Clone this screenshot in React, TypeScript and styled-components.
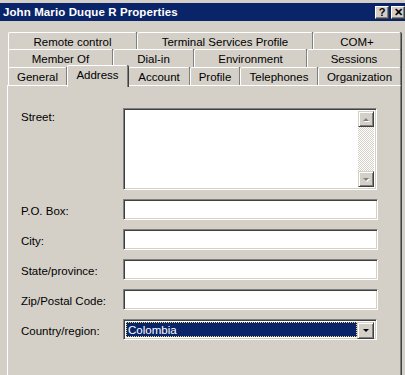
import React from "react";
import styled, { createGlobalStyle } from "styled-components";

const Global = createGlobalStyle`
  html, body { margin: 0; padding: 0; background: #d4d0c8; overflow: hidden; }
  body { font-family: "Liberation Sans", Arial, sans-serif; font-size: 11px; color: #000; }
`;

const Window = styled.div`
  width: 405px;
  height: 375px;
  background: #d4d0c8;
  border-top: 1px solid #d4d0c8;
  box-sizing: border-box;
  overflow: hidden;
`;

const TitleBar = styled.div`
  height: 18px;
  margin-top: 2px;
  background: #0a246a;
  display: flex;
  align-items: center;
  padding-left: 3px;
`;

const TitleText = styled.div`
  flex: 1;
  color: #fff;
  font-weight: bold;
  font-size: 11.5px;
  font-family: "Liberation Sans", Tahoma, sans-serif;
  letter-spacing: 0.1px;
`;

const CaptionButton = styled.div`
  width: 14px;
  height: 13px;
  background: #d4d0c8;
  box-sizing: border-box;
  border-top: 1px solid #fff;
  border-left: 1px solid #fff;
  border-right: 1px solid #404040;
  border-bottom: 1px solid #404040;
  box-shadow: inset -1px -1px 0 #808080;
  margin-left: 2px;
  display: flex;
  align-items: center;
  justify-content: center;
  font-weight: bold;
  font-size: 11px;
  line-height: 1;
  color: #000;
`;

const Body = styled.div`
  padding: 11px 0 0 7px;
`;

const TabRow = styled.div<{ $h: number }>`
  display: flex;
  height: ${(p) => p.$h}px;
  margin-left: 1px;
  position: relative;
`;

const Tab = styled.div<{ $w: number; $sel?: boolean }>`
  width: ${(p) => p.$w}px;
  flex: none;
  box-sizing: border-box;
  border-top: 1px solid #fff;
  border-left: 1px solid #fff;
  border-right: 1px solid #808080;
  box-shadow: 1px 0 0 #404040;
  border-radius: 2px 2px 0 0;
  background: #d4d0c8;
  display: flex;
  align-items: center;
  justify-content: center;
  white-space: nowrap;
  height: ${(p) => (p.$sel ? "22px" : "19px")};
  margin-top: ${(p) => (p.$sel ? "-2px" : "0")};
  position: relative;
  z-index: ${(p) => (p.$sel ? 2 : 1)};
  padding-bottom: ${(p) => (p.$sel ? "4px" : "0")};
  font-size: 11.5px;
`;

const Panel = styled.div`
  width: 394px;
  height: 320px;
  box-sizing: border-box;
  border-top: 1px solid #fff;
  border-left: 1px solid #fff;
  border-right: 1px solid #808080;
  box-shadow: 1px 0 0 #404040;
  padding: 22px 0 0 13px;
  position: relative;
  z-index: 1;
`;

const Form = styled.div`
  display: grid;
  grid-template-columns: 102px 255px;
  row-gap: 9px;
  align-items: center;
`;

const Label = styled.div<{ $top?: boolean }>`
  align-self: ${(p) => (p.$top ? "start" : "center")};
  padding-top: ${(p) => (p.$top ? "3px" : "2px")};
  font-size: 11.5px;
`;

const sunken = `
  box-sizing: border-box;
  border-top: 1px solid #808080;
  border-left: 1px solid #808080;
  border-right: 1px solid #fff;
  border-bottom: 1px solid #fff;
  box-shadow: inset 1px 1px 0 #404040, inset -1px -1px 0 #d4d0c8;
`;

const Input = styled.div`
  ${sunken}
  height: 21px;
  background: #fff;
`;

const TextArea = styled.div`
  ${sunken}
  width: 254px;
  height: 82px;
  background: #fff;
  display: flex;
  justify-content: flex-end;
  padding: 2px;
`;

const ScrollBar = styled.div`
  width: 16px;
  display: flex;
  flex-direction: column;
  justify-content: space-between;
  background-color: #fff;
  background-image: repeating-conic-gradient(#d4d0c8 0 25%, #fff 0 50%);
  background-size: 2px 2px;
`;

const ScrollBtn = styled.div`
  width: 16px;
  height: 16px;
  box-sizing: border-box;
  background: #d4d0c8;
  border-top: 1px solid #d4d0c8;
  border-left: 1px solid #d4d0c8;
  border-right: 1px solid #404040;
  border-bottom: 1px solid #404040;
  box-shadow: inset 1px 1px 0 #fff, inset -1px -1px 0 #808080;
  display: flex;
  align-items: center;
  justify-content: center;
`;

const Select = styled.div`
  ${sunken}
  width: 254px;
  height: 21px;
  background: #fff;
  display: flex;
  padding: 2px;
`;

const SelectValue = styled.div`
  flex: 1;
  background: #0a246a;
  color: #fff;
  outline: 1px dotted #e8e070;
  outline-offset: -1px;
  display: flex;
  align-items: center;
  padding-left: 2px;
  font-size: 11.5px;
`;

const DropBtn = styled(ScrollBtn)`
  height: 17px;
  width: 17px;
`;

const Arrow = ({ dir, disabled }: { dir: "up" | "down"; disabled?: boolean }) => {
  const pts = dir === "up" ? "4,6 7,3 10,6" : "4,3 7,6 10,3";
  const pts2 = dir === "up" ? "5,7 8,4 11,7" : "5,4 8,7 11,4";
  return (
    <svg width="14" height="9" viewBox="0 0 14 9">
      {disabled && <polygon points={pts2} fill="#fff" />}
      <polygon points={pts} fill={disabled ? "#808080" : "#000"} />
    </svg>
  );
};

export default function App() {
  return (
    <>
      <Global />
      <Window>
        <TitleBar>
          <TitleText>John Mario Duque R Properties</TitleText>
          <CaptionButton>?</CaptionButton>
          <CaptionButton>✕</CaptionButton>
        </TitleBar>
        <Body>
          <TabRow $h={17}>
            <Tab $w={129}>Remote control</Tab>
            <Tab $w={176}>Terminal Services Profile</Tab>
            <Tab $w={88}>COM+</Tab>
          </TabRow>
          <TabRow $h={18}>
            <Tab $w={105}>Member Of</Tab>
            <Tab $w={81}>Dial-in</Tab>
            <Tab $w={113}>Environment</Tab>
            <Tab $w={94}>Sessions</Tab>
          </TabRow>
          <TabRow $h={18}>
            <Tab $w={59}>General</Tab>
            <Tab $w={61} $sel>Address</Tab>
            <Tab $w={62}>Account</Tab>
            <Tab $w={50}>Profile</Tab>
            <Tab $w={78}>Telephones</Tab>
            <Tab $w={83}>Organization</Tab>
          </TabRow>
          <Panel>
            <Form>
              <Label $top>Street:</Label>
              <TextArea>
                <ScrollBar>
                  <ScrollBtn><Arrow dir="up" disabled /></ScrollBtn>
                  <ScrollBtn><Arrow dir="down" disabled /></ScrollBtn>
                </ScrollBar>
              </TextArea>
              <Label>P.O. Box:</Label>
              <Input />
              <Label>City:</Label>
              <Input />
              <Label>State/province:</Label>
              <Input />
              <Label>Zip/Postal Code:</Label>
              <Input />
              <Label>Country/region:</Label>
              <Select>
                <SelectValue>Colombia</SelectValue>
                <DropBtn><Arrow dir="down" /></DropBtn>
              </Select>
            </Form>
          </Panel>
        </Body>
      </Window>
    </>
  );
}
